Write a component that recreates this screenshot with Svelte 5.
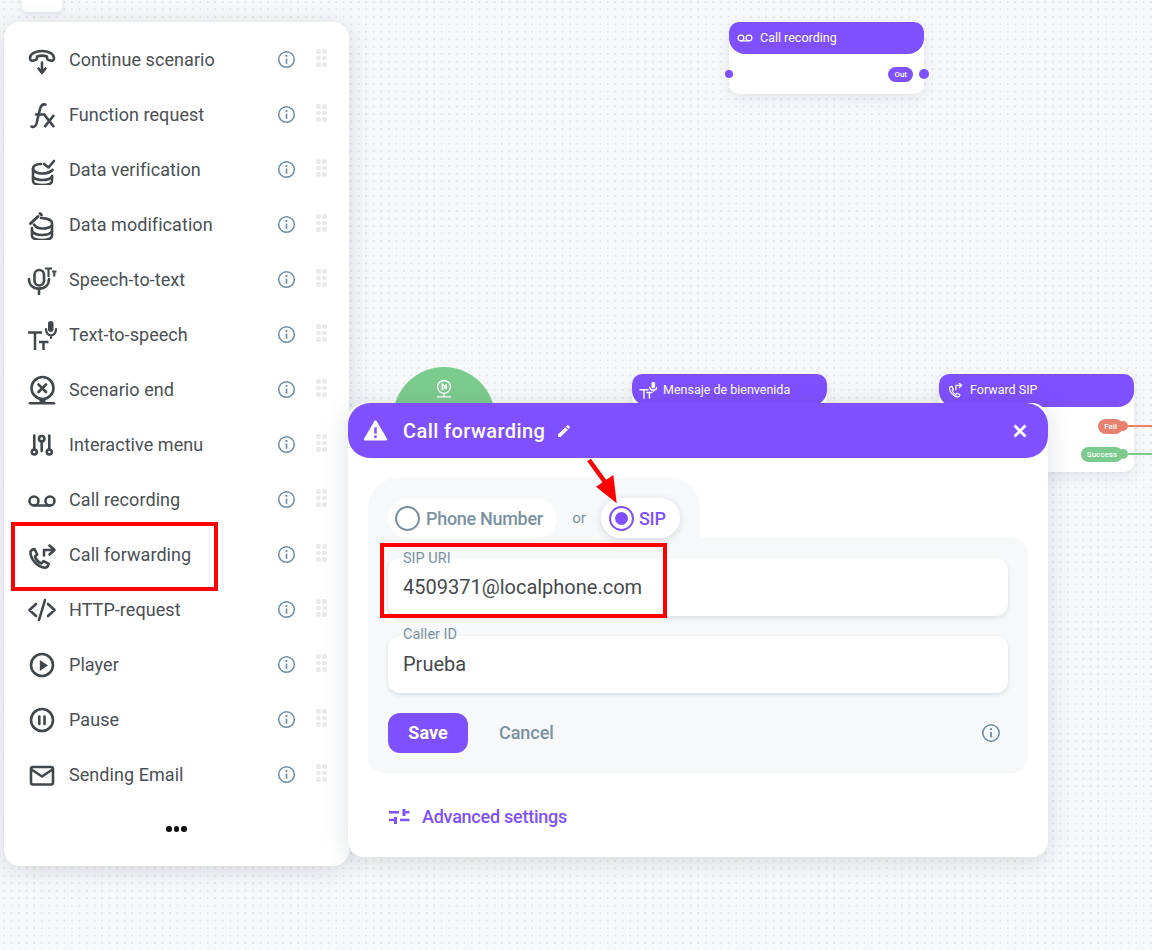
<script>
  const S = 'fill="none" stroke="currentColor" stroke-width="2.600" stroke-linecap="round" stroke-linejoin="round"';
  const phone = `<path d="M6.500 6.500 4.500 8C3.800 15 11 24 19 24.500c1.500 0 3-1.500 3.500-3v-1l-5-2.500-2 2.300c-2.500-1-5.500-4-6.500-7l2.200-2-2.500-5.300c-1-.3-1.500 0-2.700.500z"/>`;
  const items = [
    { label: 'Continue scenario', icon: `<g ${S}><path d="M3 13c0-4.500 6-7 12-7s12 2.500 12 7c0 2-1 3-2.500 2.700l-3-.7c-1.200-.3-1.500-1-1.500-2.200v-1.300c-3-1-7-1-10 0v1.300c0 1.200-.3 1.900-1.500 2.200l-3 .7C4 16 3 15 3 13z"/><path d="M15 17.500v10M11.500 23.500 15 28l3.500-4.500"/></g>` },
    { label: 'Function request', icon: `<g ${S}><path d="M4.500 26.500c2 1 4 .5 5-3L13 9c.8-3.500 2.500-5 5.500-4.500M9 14.500h8.500"/><path d="m17.500 15 9.500 12M27 15l-9.500 12" stroke-width="2.800" stroke-linecap="butt"/></g>` },
    { label: 'Data verification', icon: `<g ${S}><path d="M14 9C9 9.300 6 11 6 13.500c0 3 4 5 9 5 4 0 8-1 10.500-3.500"/><path d="M6 13.500V26c0 2.500 4 4 9.500 4s9.500-1.500 9.500-4v-5"/><path d="M6 22c2 2 5.500 3 9.500 3s7.500-1 9.500-3"/><path d="m17 9 4.500 3.500L27 6"/></g>` },
    { label: 'Data modification', icon: `<g ${S}><path d="M3.500 13.500 11 6.500M13 3.500 14.500 5" stroke-width="3"/><path d="M14 8c6 .2 11 2 11 5v13c0 2.500-4.500 4-10 4s-10-1.500-10-4v-8"/><path d="M7 14.500c1.500 2.500 4.500 4 8.500 4 4 0 7.500-1 9.500-3"/><path d="M5 21c1.500 2.500 5 4 10 4s8.500-1.500 10-3.500"/></g>` },
    { label: 'Speech-to-text', icon: `<g ${S}><rect x="7.500" y="5" width="9.500" height="15.500" rx="4.700"/><path d="M2 14c0 6 4 9.500 10 9.500s10-3.500 10-9.500M12 23.500V29"/><path d="M18 3.500h7M21.500 3.500V12M25 6.500h4.500M27.300 6.500v5" stroke-width="2.100" stroke-linecap="butt"/></g>` },
    { label: 'Text-to-speech', icon: `<g ${S}><path d="M1 12.500h14M8 12.500V30M12 22h9.500M16.500 22v8" stroke-width="2.500" stroke-linecap="butt"/><rect x="21" y="1" width="5.500" height="11" rx="2.700" fill="currentColor" stroke="none"/><path d="M19 9c0 4 2.500 6.500 5 6.500S29 13 29 9M24 15.500V18" stroke-width="2.200"/></g>` },
    { label: 'Scenario end', icon: `<g ${S}><circle cx="15.500" cy="13" r="11"/><path d="m11.500 9.500 7.500 7.500M19 9.500 11.500 17"/><path d="M3 28.300h24"/><path d="M15.500 25v3.500" stroke-width="6" stroke-linecap="butt"/></g>` },
    { label: 'Interactive menu', icon: `<g ${S} stroke-width="2.300"><path d="M7.300 5.500V19.500M14.700 11.500V21M22.300 5.500V19.500"/><circle cx="7.300" cy="22" r="2.500"/><circle cx="14.700" cy="8.700" r="2.700"/><circle cx="22.300" cy="22" r="2.500"/></g>` },
    { label: 'Call recording', icon: `<g ${S}><circle cx="7" cy="16" r="4.500"/><circle cx="23" cy="16" r="4.500"/><path d="M7 20.500h16"/></g>` },
    { label: 'Call forwarding', icon: `<g ${S} stroke-width="2.400"><g transform="translate(-1 3.200)">${phone}</g><path d="M17 15.500V10h10M22.500 5.500l5 4.500-5 4.500"/></g>` },
    { label: 'HTTP-request', icon: `<g ${S}><path d="M9 9 2.500 15 9 21M21 9l6.500 6-6.500 6M18 5l-6 20"/></g>` },
    { label: 'Player', icon: `<g ${S} stroke-width="2.800"><circle cx="15" cy="15" r="11"/></g><path d="M12.800 10 21 15.500 12.800 21z" fill="currentColor"/>` },
    { label: 'Pause', icon: `<g ${S} stroke-width="2.800"><circle cx="15" cy="15" r="11"/><path d="M12.300 11.500v7.500M17.500 11.500v7.500"/></g>` },
    { label: 'Sending Email', icon: `<g ${S}><rect x="4" y="7" width="22" height="17.500" rx="2"/><path d="m4.500 9.500 10.500 7 10.500-7"/></g>` }
  ];
  const recIcon = `<circle cx="7" cy="14" r="5"/><circle cx="21" cy="14" r="5"/><path d="M7 19h14"/>`;
  const fwdIcon = `${phone}<path d="M15.500 12V5.500c0-1 .5-1.500 1.500-1.500h8M21.500 0.500 25.500 4l-4 4"/>`;
  const ttsIcon = `<path d="M1.500 13.500h12.500M7.700 13.500V27M12.500 18h7.500M16.200 18v8.500"/><rect x="19.500" y="1" width="5.500" height="10.500" rx="2.700" fill="currentColor" stroke="none"/><path d="M16.500 9.500c.5 3 3 5 5.800 5s5.200-2 5.700-5M22.300 14v2"/>`;
</script>

{#snippet info(cls)}
  <svg class={cls} viewBox="0 0 20 20" aria-hidden="true">
    <circle cx="10" cy="10" r="8.200" fill="none" stroke="currentColor" stroke-width="1.600"/>
    <circle cx="10" cy="6.200" r="1.100" fill="currentColor"/>
    <path d="M10 9v5.500" stroke="currentColor" stroke-width="1.800" fill="none"/>
  </svg>
{/snippet}

{#snippet nodeIcon(markup)}
  <svg class="node-icon" viewBox="0 0 28 28" fill="none" stroke="currentColor" stroke-width="2.200" stroke-linecap="round" stroke-linejoin="round" aria-hidden="true">{@html markup}</svg>
{/snippet}

<div class="canvas">
  <div class="toolbar-stub"></div>

  <div class="node rec">
    <div class="node-head">{@render nodeIcon(recIcon)}<span>Call recording</span></div>
    <div class="node-body">
      <span class="pin in"></span>
      <span class="pill purple">Out</span>
      <span class="port purple-dot"></span>
    </div>
  </div>

  <div class="start">
    <svg viewBox="0 0 28 28" fill="none" stroke="#fff" stroke-width="2" aria-hidden="true">
      <circle cx="14" cy="11" r="9"/><path d="M11.500 7.500v7l5-3.500zM17 7.500v7M4 25h20M14 20v5"/>
    </svg>
  </div>

  <div class="node msg">
    <div class="node-head">{@render nodeIcon(ttsIcon)}<span>Mensaje de bienvenida</span></div>
  </div>

  <div class="node fwd">
    <div class="node-head">{@render nodeIcon(fwdIcon)}<span>Forward SIP</span></div>
    <div class="node-rows">
      <div class="out-row"><span class="pill red">Fail</span><span class="port red-dot"></span><span class="edge red-edge"></span></div>
      <div class="out-row"><span class="pill green">Success</span><span class="port green-dot"></span><span class="edge green-edge"></span></div>
    </div>
  </div>

  <aside class="palette">
    <ul>
      {#each items as item}
        <li>
          <svg class="row-icon" viewBox="0 0 30 30" aria-hidden="true">{@html item.icon}</svg>
          <span class="row-label">{item.label}</span>
          {@render info('row-info')}
          <span class="grip" aria-hidden="true">
            {#each Array(6) as _}<i></i>{/each}
          </span>
        </li>
      {/each}
    </ul>
    <div class="more" aria-hidden="true"><i></i><i></i><i></i></div>
  </aside>

  <section class="dialog">
    <header>
      <svg class="warn" viewBox="0 0 24 24" aria-hidden="true">
        <path fill="#fff" stroke="#fff" stroke-width="2.400" stroke-linejoin="round" d="M12 3.500 2 20.500h20z"/>
        <path d="M12 9v6" stroke="#7f50ff" stroke-width="2.400"/><circle cx="12" cy="18" r="1.400" fill="#7f50ff"/>
      </svg>
      <h2>Call forwarding</h2>
      <svg class="pencil" viewBox="0 0 24 24" aria-hidden="true"><path fill="#fff" d="M3 17.250V21h3.750L17.810 9.940l-3.750-3.750L3 17.250zM20.710 7.040a1 1 0 0 0 0-1.410l-2.340-2.340a1 1 0 0 0-1.410 0l-1.830 1.830 3.750 3.750 1.830-1.830z"/></svg>
      <svg class="close" viewBox="0 0 16 16" aria-hidden="true"><path d="m2.500 2.500 11 11M13.500 2.500l-11 11" stroke="#fff" stroke-width="2.800" fill="none"/></svg>
    </header>

    <div class="dialog-body">
      <div class="tab">
        <div class="choice off"><span class="radio"></span><span class="choice-text">Phone Number</span></div>
        <span class="or">or</span>
        <div class="choice on"><span class="radio"><b></b></span><span class="choice-text">SIP</span></div>
      </div>
      <div class="panel">
        <div class="field"><label for="sip">SIP URI</label><div id="sip" class="value">4509371@localphone.com</div></div>
        <div class="field"><label for="cid">Caller ID</label><div id="cid" class="value">Prueba</div></div>
        <div class="actions">
          <button class="save">Save</button>
          <button class="cancel">Cancel</button>
          {@render info('panel-info')}
        </div>
      </div>
      <div class="advanced">
        <svg viewBox="0 0 22 16" aria-hidden="true" fill="#7f50ff">
          <rect x="1" y="3" width="10" height="2.500"/><rect x="14.500" y="1" width="3" height="7"/><rect x="17.500" y="3" width="4" height="2.500"/>
          <rect x="1" y="10.700" width="5" height="2.500"/><rect x="6" y="9" width="3" height="7"/><rect x="12" y="10.700" width="9.500" height="2.500"/>
        </svg>
        <span>Advanced settings</span>
      </div>
    </div>
  </section>

  <div class="mark mark-a"></div>
  <div class="mark mark-b"></div>
  <svg class="arrow" viewBox="0 0 40 60" aria-hidden="true">
    <path d="M3 2 19 24" stroke="#f00" stroke-width="4.500" fill="none"/>
    <path d="M10 28.700 27.300 17 30.700 45.300z" fill="#f00"/>
  </svg>
</div>

<style>
  :global(body) { margin: 0; }
  .canvas {
    position: relative;
    width: 1152px;
    height: 950px;
    overflow: hidden;
    background-color: #f7f8fa;
    background-image: radial-gradient(circle at 4px 2px, #dcdfe3 0.6px, transparent 1px);
    background-size: 7.560px 7.480px;
    font-family: Roboto, sans-serif;
  }
  .toolbar-stub {
    position: absolute; left: 22px; top: -30px; width: 40px; height: 42px;
    background: #fff; border-radius: 6px;
    box-shadow: 0 2px 6px rgba(60,70,80,.1);
  }

  .node { position: absolute; width: 195px; background: #fff; border-radius: 10px; box-shadow: 0 5px 14px rgba(60,70,90,.1); }
  .node-head {
    display: flex; align-items: center; gap: 7px;
    height: 32px; padding: 0 8px;
    background: #7f50ff; color: #fff;
    border-radius: 10px 10px 16px 16px;
    font-size: 12.500px; font-weight: 400;
  }
  .node-head span { margin-top: -2px; }
  .node-icon { width: 16px; height: 16px; flex: none; }
  .msg .node-icon { width: 18px; height: 18px; margin-right: -1px; margin-left: -1px; }
  .rec { left: 729px; top: 22px; height: 72px; }
  .msg { left: 632px; top: 374px; height: 34px; }
  .fwd { left: 939px; top: 374px; height: 98px; }
  .fwd .node-head { height: 33px; }
  .node-body { position: relative; display: flex; justify-content: flex-end; align-items: center; height: 40px; padding-right: 11px; }
  .pin { position: absolute; left: -4px; top: 16px; width: 8px; height: 8px; border-radius: 50%; background: #7f50ff; }
  .pill { display: inline-flex; align-items: center; height: 15px; padding: 0 6px; border-radius: 8px; color: #fff; font-size: 8px; font-weight: 500; }
  .purple { background: #7f50ff; }
  .red { background: #e8806f; }
  .green { background: #7ccb8e; }
  .port { position: absolute; right: -5px; width: 10px; height: 10px; border-radius: 50%; }
  .purple-dot { background: #7f50ff; top: 15px; }
  .red-dot { background: #e8806f; }
  .green-dot { background: #7ccb8e; }
  .node-rows { display: flex; flex-direction: column; gap: 12px; padding: 11px 11px 0 0; }
  .out-row { position: relative; display: flex; justify-content: flex-end; align-items: center; height: 16px; }
  .edge { position: absolute; left: 100%; height: 1.500px; width: 40px; margin-left: 5px; top: 7px; }
  .red-edge { background: #e8806f; }
  .green-edge { background: #7ccb8e; }

  .start {
    position: absolute; left: 393px; top: 367px; width: 102px; height: 102px;
    box-sizing: border-box; padding-top: 12px;
    display: flex; justify-content: center; align-items: flex-start;
    border-radius: 50%; background: #7ccb8e;
  }
  .start svg { width: 20px; height: 20px; }

  .palette {
    position: absolute; left: 4px; top: 22px; width: 345px; height: 844px;
    box-sizing: border-box; padding-top: 10px;
    background: #fff; border-radius: 16px;
    box-shadow: 0 4px 24px rgba(50,65,80,.17);
  }
  ul { list-style: none; margin: 0; padding: 0; }
  li { display: flex; align-items: center; height: 55px; padding-left: 23px; color: #4a4f53; }
  .row-icon { width: 30px; height: 30px; flex: none; color: #42474b; }
  .row-label { margin-left: 12px; width: 208px; font-size: 18px; line-height: 24px; flex: none; letter-spacing: .06px; }
  :global(.row-info) { width: 19px; height: 19px; color: #6f8ea1; flex: none; margin-top: -1px; }
  .grip { display: grid; grid-template-columns: 4.500px 4.500px; gap: 2px 1.500px; margin-left: 20px; margin-top: -3px; }
  .grip i { width: 4.500px; height: 4.500px; border-radius: 50%; background: #e8e9ea; }
  .more { display: flex; justify-content: center; gap: 2px; margin-top: 24px; }
  .more i { width: 5.500px; height: 5.500px; border-radius: 50%; background: #111; }

  .dialog {
    position: absolute; left: 348px; top: 403px; width: 700px; height: 454px;
    background: #fff; border-radius: 16px;
    box-shadow: 0 4px 24px rgba(50,65,80,.17);
  }
  header {
    display: flex; align-items: center;
    height: 55px; padding: 0 20px 0 15px;
    background: #7f50ff; color: #fff;
    border-radius: 22px;
  }
  .warn { width: 25px; height: 25px; flex: none; }
  h2 { margin: 0 0 0 15px; font-size: 20px; font-weight: 500; line-height: 28px; letter-spacing: .42px; }
  .pencil { width: 16px; height: 16px; margin-left: 11px; }
  .close { width: 16px; height: 16px; margin-left: auto; }
  .dialog-body { padding: 20px 20px 0; }
  .tab {
    display: flex; align-items: center;
    width: 332px; height: 60px; box-sizing: border-box;
    padding: 20px 20px 0;
    background: #f6f8fa; border-radius: 30px 30px 0 0;
  }
  .choice {
    display: flex; align-items: center; gap: 6px;
    height: 40px; box-sizing: border-box; border-radius: 20px;
    font-size: 18px; font-weight: 500; background: #fff;
  }
  .choice-text { letter-spacing: -.3px; }
  .choice.off { width: 169px; padding-left: 7px; color: #7b919f; }
  .choice.on { width: 79px; padding-left: 8px; color: #7f50ff; box-shadow: 0 2px 8px rgba(60,70,90,.16); gap: 5px; }
  .or { width: 44px; text-align: center; font-size: 15px; color: #7b919f; }
  .radio {
    display: flex; align-items: center; justify-content: center;
    width: 25px; height: 25px; box-sizing: border-box;
    border: 2px solid #7b919f; border-radius: 50%;
  }
  .on .radio { border-color: #7f50ff; }
  .radio b { width: 13px; height: 13px; border-radius: 50%; background: #7f50ff; }
  .panel {
    box-sizing: border-box; height: 235px; padding: 20px;
    background: #f6f8fa; border-radius: 0 16px 16px 16px;
  }
  .field {
    position: relative; height: 58px; box-sizing: border-box;
    padding: 16px 15px 0; margin-bottom: 20px;
    background: #fff; border-radius: 12px;
    box-shadow: 0 2px 4px rgba(60,70,90,.14);
  }
  .field:nth-child(2) { height: 57px; padding-top: 15px; }
  .field:nth-child(2) label { top: -9px; }
  label { position: absolute; left: 15px; top: -7px; font-size: 14.500px; line-height: 16px; color: #7b919f; }
  .value { font-size: 20px; line-height: 26px; color: #46494c; }
  .actions { display: flex; align-items: center; height: 40px; }
  .save {
    width: 80px; height: 40px; padding: 0 0 2px; border: 0; border-radius: 12px;
    background: #7f50ff; color: #fff;
    font: 700 18px Roboto, sans-serif;
  }
  .cancel {
    margin-left: 31px; padding: 0 0 2px; border: 0; background: none;
    color: #7b919f; font: 500 18px Roboto, sans-serif; letter-spacing: -.05px;
  }
  :global(.panel-info) { width: 20px; height: 20px; color: #6f8ea1; margin-left: auto; margin-right: 7px; }
  .advanced {
    display: flex; align-items: center; gap: 12px;
    margin: 31px 0 0 20px; height: 24px;
    color: #7f50ff; font-size: 18px; font-weight: 500; letter-spacing: -.25px;
  }
  .advanced svg { width: 22px; height: 16px; }

  .mark { position: absolute; box-sizing: border-box; border: 4px solid #f00; }
  .mark-a { left: 11px; top: 522px; width: 207px; height: 69px; }
  .mark-b { left: 380px; top: 543px; width: 287px; height: 75px; }
  .arrow { position: absolute; left: 586px; top: 458px; width: 40px; height: 60px; }
</style>
